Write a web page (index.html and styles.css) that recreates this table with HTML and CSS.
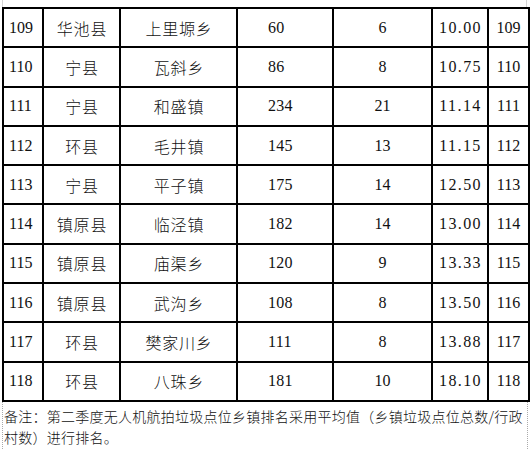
FILE: index.html
```html
<!DOCTYPE html>
<html lang="zh">
<head>
<meta charset="utf-8">
<link rel="stylesheet" href="styles.css">
</head>
<body>
<div class="page">
  <div class="top-gap"></div>
  <table class="rank">
    <colgroup>
      <col class="c1"><col class="c2"><col class="c3"><col class="c4"><col class="c5"><col class="c6"><col class="c7">
    </colgroup>
    <tbody>
      <tr><td class="no">109</td><td class="cn">华池县</td><td class="cn">上里塬乡</td><td class="cnt">60</td><td class="num">6</td><td class="avg">10.00</td><td class="num">109</td></tr>
      <tr><td class="no">110</td><td class="cn">宁县</td><td class="cn">瓦斜乡</td><td class="cnt">86</td><td class="num">8</td><td class="avg">10.75</td><td class="num">110</td></tr>
      <tr><td class="no">111</td><td class="cn">宁县</td><td class="cn">和盛镇</td><td class="cnt">234</td><td class="num">21</td><td class="avg">11.14</td><td class="num">111</td></tr>
      <tr><td class="no">112</td><td class="cn">环县</td><td class="cn">毛井镇</td><td class="cnt">145</td><td class="num">13</td><td class="avg">11.15</td><td class="num">112</td></tr>
      <tr><td class="no">113</td><td class="cn">宁县</td><td class="cn">平子镇</td><td class="cnt">175</td><td class="num">14</td><td class="avg">12.50</td><td class="num">113</td></tr>
      <tr><td class="no">114</td><td class="cn">镇原县</td><td class="cn">临泾镇</td><td class="cnt">182</td><td class="num">14</td><td class="avg">13.00</td><td class="num">114</td></tr>
      <tr><td class="no">115</td><td class="cn">镇原县</td><td class="cn">庙渠乡</td><td class="cnt">120</td><td class="num">9</td><td class="avg">13.33</td><td class="num">115</td></tr>
      <tr><td class="no">116</td><td class="cn">镇原县</td><td class="cn">武沟乡</td><td class="cnt">108</td><td class="num">8</td><td class="avg">13.50</td><td class="num">116</td></tr>
      <tr><td class="no">117</td><td class="cn">环县</td><td class="cn">樊家川乡</td><td class="cnt">111</td><td class="num">8</td><td class="avg">13.88</td><td class="num">117</td></tr>
      <tr><td class="no">118</td><td class="cn">环县</td><td class="cn">八珠乡</td><td class="cnt">181</td><td class="num">10</td><td class="avg">18.10</td><td class="num">118</td></tr>
    </tbody>
  </table>
  <div class="note">备注：第二季度无人机航拍垃圾点位乡镇排名采用平均值（乡镇垃圾点位总数/行政村数）进行排名。</div>
</div>
</body>
</html>
```

FILE: styles.css
```css
html, body {
  margin: 0;
  padding: 0;
  background: #ffffff;
}

body {
  width: 530px;
  height: 450px;
  overflow: hidden;
  color: #111111;
  font-family: "Liberation Serif", "Noto Sans CJK SC", serif;
}

.page {
  display: flex;
  flex-direction: column;
}

.top-gap {
  height: 7px;
  margin-left: 2px;
  width: 525px;
  border-left: 1px solid #d4d4d4;
  border-right: 1px solid #d4d4d4;
  box-sizing: border-box;
}

.rank {
  border-collapse: collapse;
  table-layout: fixed;
  margin-left: 2px;
  width: 526px;
}

.c1 { width: 40px; }
.c2 { width: 77px; }
.c3 { width: 117px; }
.c4 { width: 96px; }
.c5 { width: 99px; }
.c6 { width: 56px; }
.c7 { width: 41px; }

.rank td {
  border: 2px solid #000000;
  height: 39.3px;
  padding: 0;
  box-sizing: border-box;
  font-size: 16px;
  text-align: center;
  vertical-align: middle;
  white-space: nowrap;
}

.rank td.no {
  text-align: left;
  padding-left: 5px;
}

.rank td.cn {
  font-family: "Noto Sans CJK SC", sans-serif;
  font-weight: 300;
  letter-spacing: 0.8px;
  padding-left: 1px;
}

.rank td.cnt {
  text-align: left;
  padding-left: 30px;
  letter-spacing: 0.3px;
}

.rank td.avg {
  letter-spacing: 1.4px;
  padding-left: 1px;
}

.note {
  margin-left: 2px;
  width: 526px;
  box-sizing: border-box;
  height: 49px;
  padding: 4px 4px 0 1px;
  border-left: 1px dotted #aaaaaa;
  border-right: 1px dotted #aaaaaa;
  font-family: "Noto Sans CJK SC", sans-serif;
  font-weight: 300;
  font-size: 14px;
  line-height: 21px;
  letter-spacing: 0.25px;
}
```
